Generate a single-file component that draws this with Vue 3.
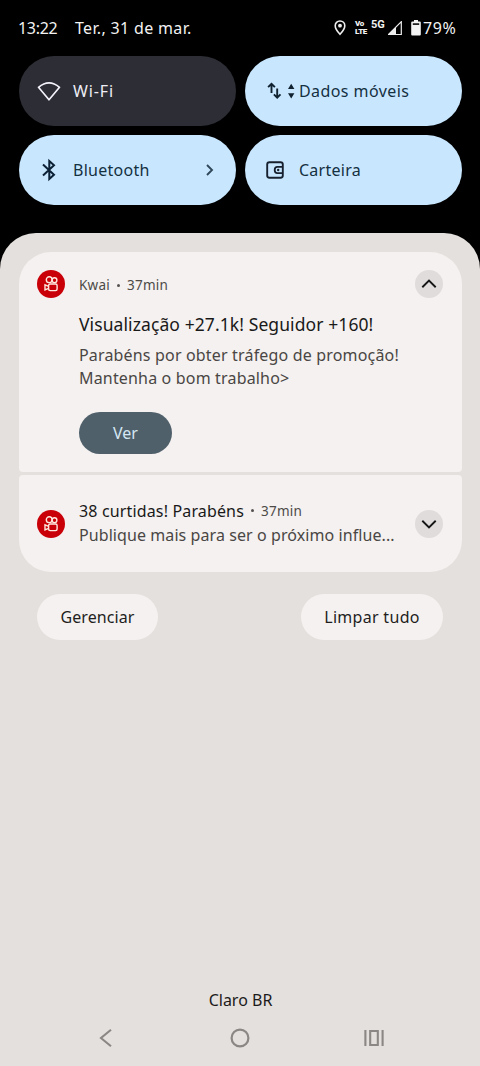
<script setup>
const tiles = [
  { id: 'wifi', label: 'Wi-Fi', active: false },
  { id: 'data', label: 'Dados móveis', active: true },
  { id: 'bt', label: 'Bluetooth', active: true, more: true },
  { id: 'wallet', label: 'Carteira', active: true },
]
</script>

<template>
  <div class="screen">
    <header class="status">
      <span class="clock">13:22</span>
      <span class="date">Ter., 31 de mar.</span>
      <div class="indicators">
        <svg class="pin" width="12" height="16" viewBox="0 0 12 16">
          <path d="M6 1C3.200 1 1.200 3 1.200 5.700 1.200 9.200 6 14.300 6 14.300s4.800-5.100 4.800-8.600C10.800 3 8.800 1 6 1z" fill="none" stroke="#eee" stroke-width="1.600" />
          <circle cx="6" cy="5.700" r="1.900" fill="#eee" />
        </svg>
        <span class="volte"><b>Vo</b><b>LTE</b></span>
        <span class="net">5G</span>
        <svg class="signal" width="14" height="14" viewBox="0 0 14 14">
          <path d="M.5 13.500L13.300.700V13.500z" fill="none" stroke="#eee" stroke-width="1.200" />
          <path d="M0 14L8 6v8z" fill="#eee" />
        </svg>
        <svg class="battery" width="10" height="16" viewBox="0 0 10 16">
          <path d="M3 0h4v1.600h1.800q1 0 1 1V14.600q0 1-1 1H1.200q-1 0-1-1V2.600q0-1 1-1H3z" fill="#f4f4f4" />
          <path d="M1.800 3.200h6.400v1.800H1.800z" fill="#222" />
        </svg>
        <span class="pct">79%</span>
      </div>
    </header>

    <section class="tiles">
      <div v-for="t in tiles" :key="t.id" class="tile" :class="[t.id, { active: t.active }]">
        <svg v-if="t.id === 'wifi'" class="icon" width="24" height="24" viewBox="0 0 24 24">
          <path d="M1.500 8.300Q12-.600 22.500 8.300L12 20.800z" fill="none" stroke="#f4f2fa" stroke-width="1.700" stroke-linejoin="round" />
        </svg>
        <svg v-else-if="t.id === 'data'" class="icon wide" width="32" height="24" viewBox="0 0 32 24">
          <g fill="none" stroke="#10222f" stroke-width="1.900">
            <path d="M8.500 14V5M5.100 8.200L8.500 4.800l3.400 3.400M14.200 9.500v9M10.900 15.400l3.300 3.300 3.300-3.300" />
          </g>
          <path d="M25 10l3.200-5.200 3.200 5.200zM25 14.200l3.200 5.200 3.200-5.200z" fill="#10222f" />
        </svg>
        <svg v-else-if="t.id === 'bt'" class="icon" width="24" height="24" viewBox="0 0 24 24">
          <path d="M6 6.500L17 16.700 12.300 21V3L17 7.300 6 17.500" fill="none" stroke="#0c2135" stroke-width="2" />
        </svg>
        <svg v-else class="icon" width="24" height="24" viewBox="0 0 24 24">
          <rect x="4.200" y="4.200" width="15.600" height="15.600" rx="2.200" fill="none" stroke="#17202e" stroke-width="1.900" />
          <path d="M19.800 8.900h-5.400q-2.700 0-2.700 3.100t2.700 3.100h5.400" fill="none" stroke="#17202e" stroke-width="1.800" />
          <circle cx="15.200" cy="12" r="1.200" fill="#17202e" />
        </svg>
        <span class="label">{{ t.label }}</span>
        <svg v-if="t.more" class="more" width="10" height="14" viewBox="0 0 10 14">
          <path d="M2 2l5 5-5 5" fill="none" stroke="#30475a" stroke-width="1.900" />
        </svg>
      </div>
    </section>

    <main class="shade">
      <article class="card first">
        <span class="app">
          <svg width="14" height="16" viewBox="0 0 14 16">
            <g fill="none" stroke="#ffe9df" stroke-width="1.400">
              <circle cx="5.200" cy="3.700" r="2.900" />
              <circle cx="10.500" cy="4.200" r="2.400" />
              <rect x="4.600" y="8" width="8.500" height="6.600" rx="1.500" />
              <path d="M4.600 10.400L1 8.900v5l3.600-1.500" />
            </g>
          </svg>
        </span>
        <div class="body">
          <div class="meta"><span class="name">Kwai</span><i class="dot"></i><span class="time">37min</span></div>
          <h2>Visualização +27.1k! Seguidor +160!</h2>
          <p>Parabéns por obter tráfego de promoção!<br />Mantenha o bom trabalho&gt;</p>
          <button class="view">Ver</button>
        </div>
        <span class="toggle">
          <svg width="16" height="10" viewBox="0 0 16 10"><path d="M1.300 8.200L8 1.600l6.700 6.600" fill="none" stroke="#151515" stroke-width="1.900" /></svg>
        </span>
      </article>

      <article class="card second">
        <span class="app">
          <svg width="14" height="16" viewBox="0 0 14 16">
            <g fill="none" stroke="#ffe9df" stroke-width="1.400">
              <circle cx="5.200" cy="3.700" r="2.900" />
              <circle cx="10.500" cy="4.200" r="2.400" />
              <rect x="4.600" y="8" width="8.500" height="6.600" rx="1.500" />
              <path d="M4.600 10.400L1 8.900v5l3.600-1.500" />
            </g>
          </svg>
        </span>
        <div class="body">
          <div class="headline"><span class="likes">38 curtidas! Parabéns</span><i class="dot"></i><span class="time">37min</span></div>
          <div class="preview">Publique mais para ser o próximo influe...</div>
        </div>
        <span class="toggle">
          <svg width="16" height="10" viewBox="0 0 16 10"><path d="M1.300 1.800L8 8.400l6.700-6.600" fill="none" stroke="#151515" stroke-width="1.900" /></svg>
        </span>
      </article>

      <div class="actions">
        <button class="manage">Gerenciar</button>
        <button class="clear">Limpar tudo</button>
      </div>

      <footer>
        <div class="carrier">Claro BR</div>
        <nav>
          <svg width="20" height="20" viewBox="0 0 20 20"><path d="M15 1.800L5 10l10 8.200" fill="none" stroke="#8a8784" stroke-width="2.100" /></svg>
          <svg width="20" height="20" viewBox="0 0 20 20"><circle cx="10" cy="10" r="8.400" fill="none" stroke="#8a8784" stroke-width="2.200" /></svg>
          <svg width="20" height="20" viewBox="0 0 20 20"><path d="M1.400 2v16M18.600 2v16M6.200 3h7.600v14H6.200z" fill="none" stroke="#8a8784" stroke-width="2.100" /></svg>
        </nav>
      </footer>
    </main>
  </div>
</template>

<style>
body { background: #000; }
</style>

<style scoped>
.screen {
  width: 480px;
  height: 1066px;
  display: flex;
  flex-direction: column;
  background: #000;
  font-family: "Noto Sans", "Open Sans", sans-serif;
  font-size: 16px;
  white-space: nowrap;
  overflow: hidden;
}
.status {
  height: 56px;
  flex: none;
  box-sizing: border-box;
  padding: 0 23px 0 18px;
  display: flex;
  align-items: center;
  color: #f2f2f2;
}
.clock { width: 57px; letter-spacing: -0.3px; }
.date { letter-spacing: 0.33px; }
.indicators { margin-left: auto; display: flex; align-items: center; }
.pin { margin-right: 9px; }
.volte { display: flex; flex-direction: column; font: 700 8px/8px Roboto, sans-serif; letter-spacing: -0.4px; width: 16px; }
.volte b { height: 8px; }
.net { font: 700 11px/12px Roboto, sans-serif; width: 16px; margin-top: -7px; }
.signal { margin-left: 1px; margin-right: 9px; }
.battery { margin-right: 2px; }
.pct { width: 34px; letter-spacing: 0.6px; }
.tiles {
  flex: none;
  padding: 0 18px 0 19px;
  display: grid;
  grid-template-columns: 217px 217px;
  grid-auto-rows: 70px;
  column-gap: 9px;
  row-gap: 9px;
}
.tile {
  display: flex;
  align-items: center;
  border-radius: 35px;
  padding: 0 21px 0 18px;
  background: #2d2d36;
  color: #eeedf5;
}
.tile.active { background: #c8e7ff; color: #15303f; }
.wifi .label { letter-spacing: 0.9px; }
.data .label { letter-spacing: 0.42px; }
.bt .label, .wallet .label { letter-spacing: 0.26px; }
.icon { width: 24px; flex: none; margin-right: 12px; }
.icon.wide { width: 32px; margin-right: 4px; }
.more { margin-left: auto; }
.shade {
  margin-top: 28px;
  flex: 1;
  display: flex;
  flex-direction: column;
  background: #e4e0dd;
  border-radius: 36px 36px 0 0;
  padding: 19px 18px 0 19px;
}
.card {
  display: flex;
  background: #f4f1f0;
  box-sizing: border-box;
  padding: 0 19px 0 18px;
}
.first { height: 220px; border-radius: 32px 32px 4px 4px; }
.second { height: 97px; margin-top: 3px; border-radius: 4px 4px 32px 32px; align-items: center; }
.app {
  width: 28px;
  height: 28px;
  flex: none;
  border-radius: 50%;
  background: #c90008;
  display: flex;
  align-items: center;
  justify-content: center;
}
.first .app, .first .toggle { margin-top: 18px; }
.body { margin-left: 14px; flex: 1; min-width: 0; }
.second .body { margin-top: -2px; }
.toggle {
  width: 28px;
  height: 28px;
  flex: none;
  border-radius: 50%;
  background: #dfdcdb;
  display: flex;
  align-items: center;
  justify-content: center;
}
.meta { height: 20px; margin-top: 23px; display: flex; align-items: center; font-size: 13.5px; color: #4d4a48; }
.name { letter-spacing: 0.25px; }
.time { letter-spacing: 0.25px; }
.dot { width: 3px; height: 3px; border-radius: 50%; background: #55514f; margin: 0 7px; }
h2 { margin: 17px 0 0; font-size: 17.5px; line-height: 24px; height: 24px; font-weight: 400; letter-spacing: 0.09px; color: #1a1919; }
p { margin: 8px 0 0; font-size: 16px; line-height: 23px; letter-spacing: 0.17px; color: #4a4644; }
button { border: 0; padding: 0; font-family: inherit; font-size: 16px; }
.view { display: block; margin-top: 22px; width: 93px; height: 42px; border-radius: 21px; background: #50606b; color: #d5e7f4; }
.headline { height: 24px; display: flex; align-items: center; font-size: 16px; color: #1a1919; }
.likes { letter-spacing: 0.15px; }
.headline .time { font-size: 13.5px; color: #4d4a48; }
.preview { height: 24px; line-height: 24px; font-size: 16px; letter-spacing: 0.08px; color: #4a4644; }
.actions { display: flex; justify-content: space-between; margin-top: 22px; padding: 0 19px 0 18px; }
.actions button { height: 46px; border-radius: 23px; background: #f4f1f0; color: #1f1e1d; }
.manage { width: 121px; letter-spacing: 0.1px; }
.clear { width: 142px; letter-spacing: 0.3px; }
footer { margin-top: auto; }
.carrier { text-align: center; line-height: 24px; color: #1c1b1b; }
nav { display: flex; justify-content: space-between; margin: 16px 78px 18px 77px; }
nav svg { display: block; }
</style>
